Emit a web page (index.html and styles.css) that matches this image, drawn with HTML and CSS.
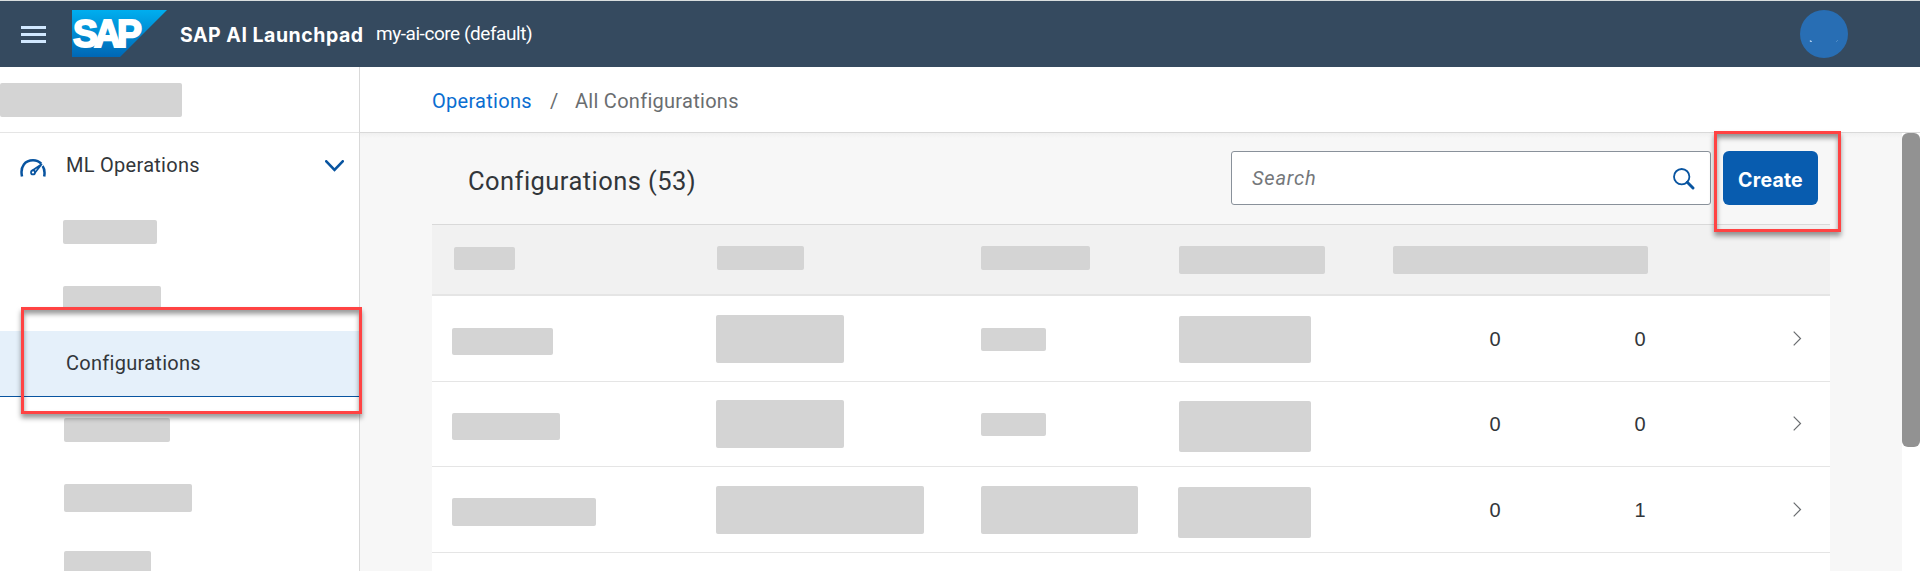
FILE: index.html
```html
<!DOCTYPE html>
<html lang="en">
<head>
<meta charset="utf-8">
<title>SAP AI Launchpad</title>
<link rel="stylesheet" href="styles.css">
</head>
<body>
<div class="app">
  <header class="shell">
    <svg class="menu" width="25" height="17" viewBox="0 0 25 17"><path d="M0 1.500h25M0 8.500h25M0 15.500h25" stroke="#d1e8ff" stroke-width="3"/></svg>
    <svg class="logo" width="95" height="47" viewBox="0 0 95 47">
      <defs><linearGradient id="g" x1="0" y1="0" x2="0" y2="1"><stop offset="0" stop-color="#00aeef"/><stop offset="1" stop-color="#0067b5"/></linearGradient></defs>
      <path d="M0 0h95L48 47H0z" fill="url(#g)"/>
      <text class="logo-text" x="1" y="37" textLength="65" lengthAdjust="spacingAndGlyphs">SAP</text>
    </svg>
    <span class="product">SAP AI Launchpad</span>
    <span class="tenant">my-ai-core (default)</span>
    <span class="avatar"><svg width="48" height="48" viewBox="0 0 48 48"><path d="M10 31.500v-1l2 1z" fill="#d1e8ff" stroke="#d1e8ff" stroke-width=".4"/><path d="M36 32l2-2" stroke="#5f96cc" stroke-width=".7"/></svg></span>
  </header>
  <div class="body">
    <nav class="side">
      <div class="side-head"><i class="bar s0"></i></div>
      <div class="group">
        <svg class="gauge" width="26" height="18" viewBox="0 0 26 18"><g fill="none" stroke="#0854a0"><path d="M2 17.500C-.2 7 5.500 1.300 13 1.300c3.500 0 6.200 1.200 8.200 3.400M22.600 7c2 2.800 2.300 6.500 1.600 10.500" stroke-width="2.500"/><path d="M14.800 14L21.600 5.300 12 11.800" stroke-width="1.700" stroke-linejoin="round"/><circle cx="13" cy="13.400" r="2" stroke-width="1.700"/></g></svg>
        <span class="group-name">ML Operations</span>
        <svg class="expand" width="19" height="12" viewBox="0 0 19 12"><path d="M1.300 1.300l8.200 8.600 8.200-8.600" fill="none" stroke="#0854a0" stroke-width="2.600" stroke-linecap="round"/></svg>
      </div>
      <i class="bar s1"></i>
      <i class="bar s2"></i>
      <div class="selected"><span>Configurations</span><b class="mark mark-nav"></b></div>
      <i class="bar s3"></i>
      <i class="bar s4"></i>
      <i class="bar s5"></i>
    </nav>
    <main class="main">
      <div class="crumbs"><a class="crumb-link">Operations</a><span class="crumb-sep">/</span><span class="crumb-current">All Configurations</span></div>
      <div class="content">
        <section class="page">
          <div class="toolbar">
            <h1 class="title">Configurations (53)</h1>
            <div class="search"><span class="placeholder">Search</span>
              <svg width="22" height="22" viewBox="0 0 22 22" fill="none" stroke="#0854a0"><circle cx="8.700" cy="8.700" r="7.700" stroke-width="1.800"/><path d="M14.300 14.300l5.700 5.700" stroke-width="2.900" stroke-linecap="round"/></svg>
            </div>
            <div class="create"><span>Create</span><b class="mark mark-create"></b></div>
          </div>
          <div class="table">
            <div class="row head">
              <i class="bar h1"></i><i class="bar h2"></i><i class="bar h3"></i><i class="bar h4"></i><i class="bar h5"></i>
            </div>
            <div class="row r1">
              <i class="bar a1"></i><i class="bar a2"></i><i class="bar a3"></i><i class="bar a4"></i>
              <span class="num">0</span><span class="num">0</span>
              <svg class="go" width="9" height="15" viewBox="0 0 9 15"><path d="M.7.700l6.800 6.800-6.800 6.800" fill="none" stroke="#6a6d70" stroke-width="1.200"/></svg>
            </div>
            <div class="row r2">
              <i class="bar b1"></i><i class="bar b2"></i><i class="bar b3"></i><i class="bar b4"></i>
              <span class="num">0</span><span class="num">0</span>
              <svg class="go" width="9" height="15" viewBox="0 0 9 15"><path d="M.7.700l6.800 6.800-6.800 6.800" fill="none" stroke="#6a6d70" stroke-width="1.200"/></svg>
            </div>
            <div class="row r3">
              <i class="bar c1"></i><i class="bar c2"></i><i class="bar c3"></i><i class="bar c4"></i>
              <span class="num">0</span><span class="num">1</span>
              <svg class="go" width="9" height="15" viewBox="0 0 9 15"><path d="M.7.700l6.800 6.800-6.800 6.800" fill="none" stroke="#6a6d70" stroke-width="1.200"/></svg>
            </div>
          </div>
        </section>
        <div class="track"><div class="thumb"></div></div>
      </div>
    </main>
  </div>
</div>
</body>
</html>
```
FILE: styles.css
```css
* { box-sizing: border-box; }
body { margin: 0; font-family: Roboto, "Liberation Sans", sans-serif; font-size: 20px; line-height: 24px; letter-spacing: .28px; color: #32363a; background: #fff; }
.app { width: 1920px; height: 571px; overflow: hidden; display: flex; flex-direction: column; }
svg { display: block; flex: none; }
span { white-space: nowrap; }
.bar { display: block; flex: none; background: #d4d4d4; border-radius: 2px; }

.shell { height: 67px; flex: none; background: #354a5f; border-top: 1px solid #d9dede; display: flex; align-items: flex-start; padding-left: 21px; }
.menu { margin: 25px 26px 0 0; }
.logo { margin: 9px 13px 0 0; }
.logo-text { font-family: "Liberation Sans", sans-serif; font-weight: 700; font-size: 38px; letter-spacing: -4px; fill: #fff; stroke: #fff; stroke-width: 2px; }
.product { width: 196px; margin-top: 22px; font-family: Inter, sans-serif; font-size: 19.500px; font-weight: 700; color: #fff; letter-spacing: .52px; }
.tenant { margin-top: 21px; font-size: 19px; color: #fff; letter-spacing: -.45px; }
.avatar { width: 48px; height: 48px; margin: 9px 72px 0 auto; border-radius: 50%; background: #286eb4; }

.body { flex: 1; min-height: 0; display: flex; }
.side { width: 360px; flex: none; border-right: 1px solid #d9d9d9; }
.side-head { height: 66px; border-bottom: 1px solid #e5e5e5; padding-top: 16px; }
.group { height: 66px; display: flex; align-items: flex-start; padding: 20px 15px 0 20px; }
.gauge { margin: 6px 20px 0 0; }
.expand { margin: 7px 0 0 auto; }
.s0 { width: 182px; height: 34px; }
.s1 { width: 94px; height: 24px; margin: 21px 0 0 63px; }
.s2 { width: 98px; height: 24px; margin: 42px 0 0 63px; }
.selected { position: relative; height: 66px; margin-top: 21px; padding: 20px 0 0 66px; background: #e5f0fa; border-bottom: 1px solid #0854a0; }
.s3 { width: 106px; height: 24px; margin: 21px 0 0 64px; }
.s4 { width: 128px; height: 28px; margin: 42px 0 0 64px; }
.s5 { width: 87px; height: 24px; margin: 39px 0 0 64px; }

.mark { position: absolute; border: 3px solid #ff4343; box-shadow: 0 4px 5px rgba(0,0,0,.4), inset 0 4px 5px rgba(0,0,0,.4); }
.mark-nav { left: 21px; top: -24px; width: 341px; height: 107px; }
.mark-create { left: -9px; top: -20px; width: 127px; height: 101px; }

.main { flex: 1; min-width: 0; display: flex; flex-direction: column; }
.crumbs { height: 66px; flex: none; display: flex; padding: 22px 0 0 72px; border-bottom: 1px solid #d9d9d9; color: #6a6d70; }
.crumb-link { width: 118px; color: #0a6ed1; }
.crumb-sep { width: 25px; }
.content { flex: 1; min-height: 0; display: flex; background: linear-gradient(#f0f0f0, #f7f7f7 5px); }
.page { width: 1398px; margin: 0 72px; flex: none; display: flex; flex-direction: column; }
.toolbar { height: 91px; flex: none; display: flex; align-items: flex-start; padding: 18px 12px 0 36px; }
.title { margin: 15px auto 0 0; font-weight: 400; font-size: 25.500px; line-height: 30px; letter-spacing: .45px; }
.search { width: 480px; height: 54px; display: flex; justify-content: space-between; padding: 14px 15px 0 20px; background: #fff; border: 1px solid #89919a; border-radius: 3px; }
.search svg { margin-top: 2px; }
.placeholder { font-style: italic; color: #74777a; letter-spacing: .8px; }
.create { position: relative; width: 95px; height: 54px; margin-left: 12px; padding-top: 17px; text-align: center; background: #085caf; border-radius: 6px; color: #fff; font-family: Inter, sans-serif; font-size: 19.500px; font-weight: 700; letter-spacing: .2px; }

.table { flex: 1; background: #fff; border-top: 1px solid #d9d9d9; }
.row { display: grid; grid-template-columns: 264px 265px 198px 214px 108px 145px 156px; align-items: start; padding-left: 20px; border-bottom: 1px solid #e5e5e5; }
.head { height: 71px; background: #f1f1f1; border-bottom-width: 2px; }
.r1, .r3 { height: 86px; }
.r2 { height: 85px; }
.num { margin-top: 31px; text-align: right; font-family: "Liberation Sans", sans-serif; }
.r2 .num { margin-top: 30px; }
.go { margin-top: 35px; justify-self: end; }
.r2 .go { margin-top: 34px; }
.h1 { width: 61px; height: 23px; margin: 22px 0 0 2px; }
.h2 { width: 87px; height: 24px; margin: 21px 0 0 1px; }
.h3 { width: 109px; height: 24px; margin-top: 21px; }
.h4 { width: 146px; height: 28px; margin-top: 21px; }
.h5 { width: 255px; height: 28px; margin-top: 21px; }
.a1 { width: 101px; height: 27px; margin-top: 32px; }
.a2 { width: 128px; height: 48px; margin-top: 19px; }
.a3 { width: 65px; height: 23px; margin-top: 32px; }
.a4 { width: 132px; height: 47px; margin-top: 20px; }
.b1 { width: 108px; height: 27px; margin-top: 31px; }
.b2 { width: 128px; height: 48px; margin-top: 18px; }
.b3 { width: 65px; height: 23px; margin-top: 31px; }
.b4 { width: 132px; height: 51px; margin-top: 19px; }
.c1 { width: 144px; height: 28px; margin-top: 31px; }
.c2 { width: 208px; height: 48px; margin-top: 19px; }
.c3 { width: 157px; height: 48px; margin-top: 19px; }
.c4 { width: 133px; height: 51px; margin: 20px 0 0 -1px; }

.track { width: 18px; background: #fff; }
.thumb { height: 314px; background: #929292; border-radius: 6px; }
```
